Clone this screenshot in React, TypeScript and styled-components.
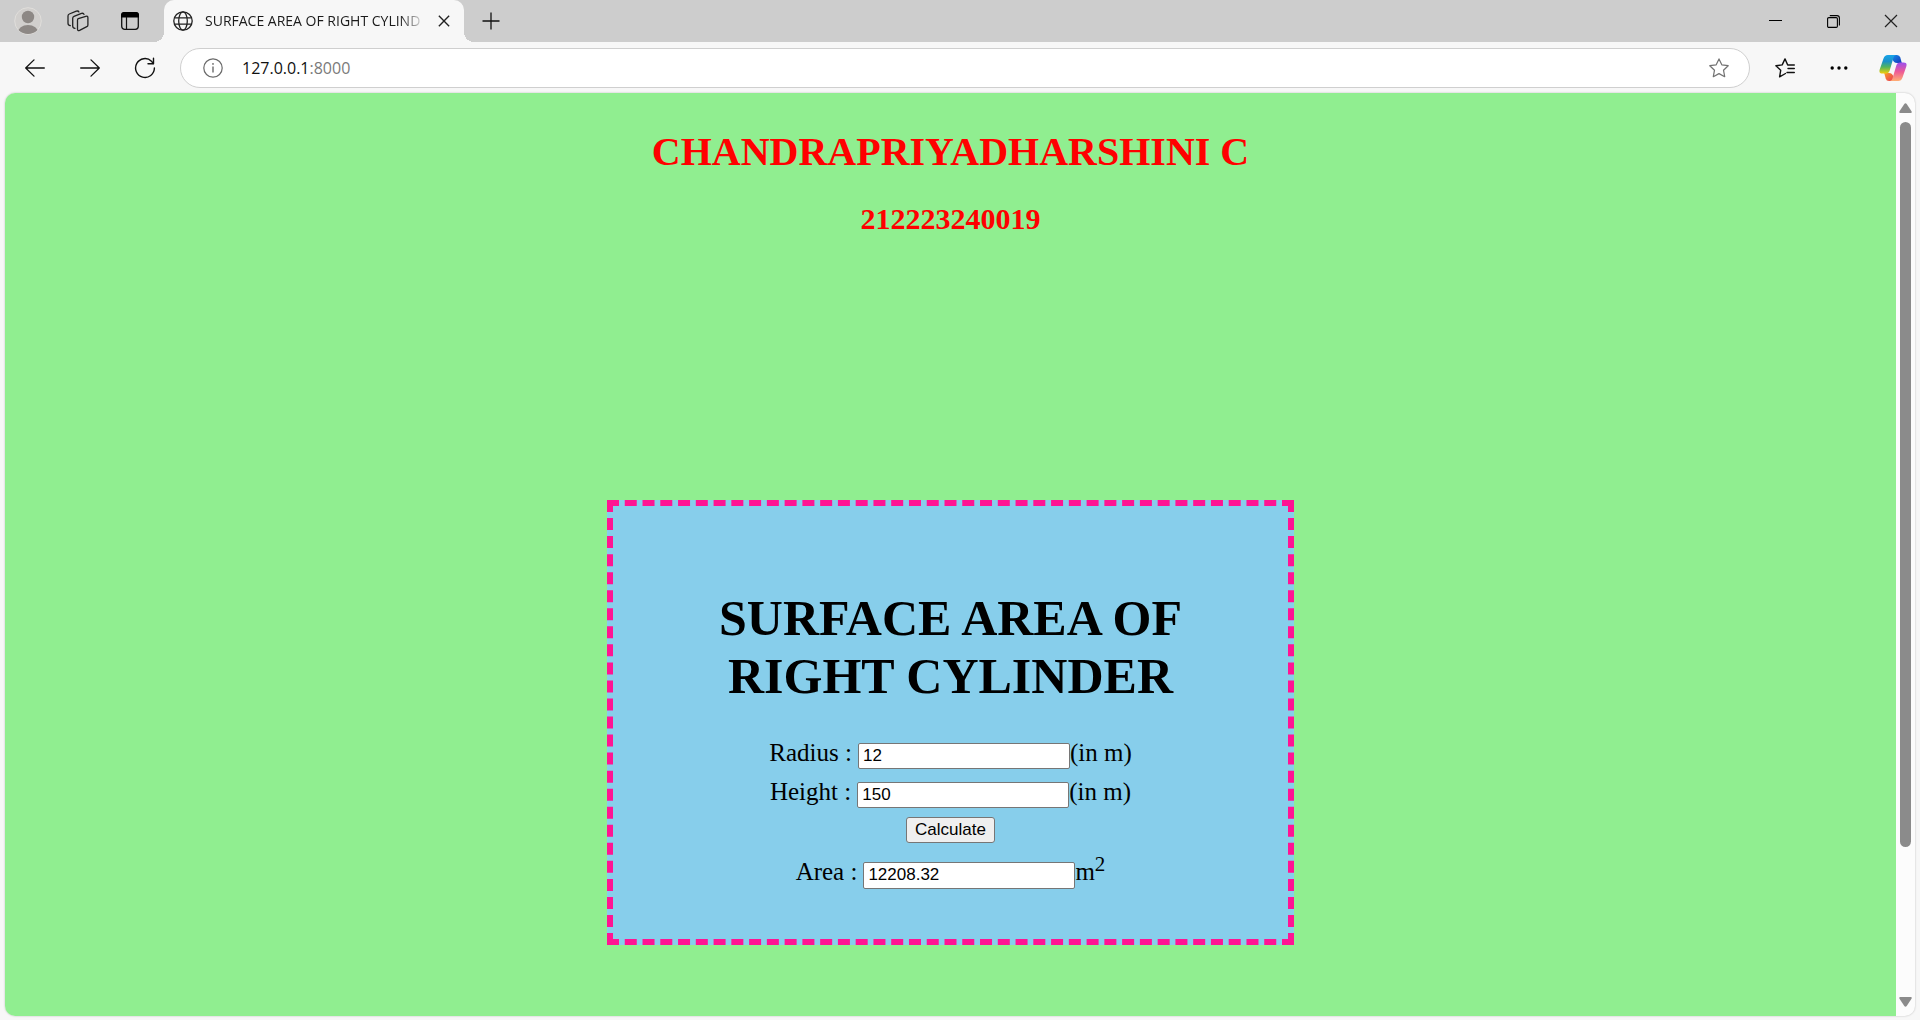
import React, { useState } from "react";
import styled, { createGlobalStyle } from "styled-components";

const uiFont = `"Open Sans", "Noto Sans", sans-serif`;
const serif = `"Liberation Serif", "Times New Roman", serif`;
const sans = `"Liberation Sans", Arial, sans-serif`;

const GlobalStyle = createGlobalStyle`
  *, *::before, *::after { box-sizing: border-box; }
  body { margin: 0; background: #f7f7f7; }
  h1, h2 { margin: 0; }
`;

const Browser = styled.div`
  display: flex;
  flex-direction: column;
  height: 100vh;
  background: #f7f7f7;
  font-family: ${uiFont};
`;

const TabStrip = styled.header`
  display: flex;
  height: 42px;
  padding-left: 2px;
  background: #cdcdcd;
`;

const ChromeButton = styled.button<{ $width: number }>`
  display: flex;
  flex: none;
  align-items: center;
  justify-content: center;
  width: ${(p) => p.$width}px;
  padding: 0;
  border: 0;
  background: transparent;
  color: #111;
`;

const StripButton = styled(ChromeButton)`
  height: 42px;
`;

const Tab = styled.div`
  position: relative;
  display: flex;
  align-items: center;
  width: 300px;
  margin-left: 9px;
  padding: 0 10px 0 9px;
  border-radius: 10px 10px 0 0;
  background: #f7f7f7;

  &::before,
  &::after {
    content: "";
    position: absolute;
    bottom: 0;
    width: 10px;
    height: 10px;
  }
  &::before {
    right: 100%;
    background: radial-gradient(circle at 0 0, transparent 10px, #f7f7f7 10px);
  }
  &::after {
    left: 100%;
    background: radial-gradient(circle at 100% 0, transparent 10px, #f7f7f7 10px);
  }
`;

const TabTitle = styled.span`
  margin-left: 12px;
  color: #1b1b1b;
  font-size: 14px;
  line-height: 20px;
  white-space: nowrap;
  mask-image: linear-gradient(to right, #000 calc(100% - 20px), rgba(0, 0, 0, 0.2));
`;

const Spacer = styled.div`
  flex: 1;
`;

const Toolbar = styled.nav`
  display: flex;
  align-items: center;
  height: 51px;
  padding-left: 7px;
`;

const AddressBar = styled.div`
  display: flex;
  flex: 1;
  align-items: center;
  height: 40px;
  margin: 0 8px;
  padding: 0 10px 0 22px;
  border: 1px solid #cfcfcf;
  border-radius: 20px;
  background: #fff;
`;

const Address = styled.div`
  flex: 1;
  margin-left: 19px;
  color: #111;
  font-size: 16px;
  line-height: 24px;
`;

const Port = styled.span`
  color: #7a7a7a;
`;

const Viewport = styled.div`
  display: flex;
  flex: 1;
  min-height: 0;
  margin: 0 5px 4px;
  overflow: hidden;
  border-radius: 10px;
  background: #fcfcfc;
  box-shadow: 0 0 2px rgba(0, 0, 0, 0.25);
`;

const Page = styled.main`
  display: flex;
  flex: 1;
  flex-direction: column;
  align-items: center;
  padding-top: 36px;
  background: lightgreen;
  color: #000;
  font-family: ${serif};
  text-align: center;
`;

const StudentName = styled.h1`
  color: red;
  font-size: 40px;
  line-height: 46px;
`;

const StudentNumber = styled.h2`
  margin-top: 27px;
  color: red;
  font-size: 30px;
  line-height: 34px;
`;

const Card = styled.form`
  display: flex;
  flex-direction: column;
  align-items: center;
  width: 687px;
  margin-top: 264px;
  padding: 50px;
  border: 6px dashed deeppink;
  background: skyblue;
  font-size: 25px;
  line-height: 29px;
`;

const CardTitle = styled.h1`
  margin: 33px 0;
  font-size: 50px;
  line-height: 58px;
`;

const Field = styled.div`
  display: flex;
  align-items: baseline;
  margin-bottom: 8px;
`;

const ResultField = styled(Field)`
  margin: 14px 0 0;
`;

const FieldLabel = styled.label`
  margin-right: 6px;
`;

const FieldInput = styled.input`
  width: 212px;
  height: 26px;
  padding: 1px 4px;
  border: 1px solid #767676;
  border-radius: 2px;
  outline: 0;
  background: #fff;
  color: #000;
  font: 17px ${sans};
`;

const ResultInput = styled(FieldInput)`
  height: 27px;
`;

const Sup = styled.sup`
  font-size: 21px;
  line-height: 0;
`;

const CalculateButton = styled.button`
  height: 26px;
  margin-top: 1px;
  padding: 0 8px;
  border: 1px solid #767676;
  border-radius: 3px;
  background: #efefef;
  color: #000;
  font: 17px ${sans};
`;

const Scrollbar = styled.div`
  display: flex;
  flex-direction: column;
  align-items: center;
  width: 19px;
  padding: 10px 0 9px;
`;

const Thumb = styled.div`
  flex: 725;
  width: 11px;
  margin-top: 9px;
  border-radius: 6px;
  background: #8b8b8b;
`;

const Rest = styled.div`
  flex: 150;
`;

const Avatar = () => (
  <svg width="28" height="28" viewBox="0 0 28 28">
    <defs>
      <clipPath id="avatar-clip"><circle cx="14" cy="14" r="13" /></clipPath>
    </defs>
    <circle cx="14" cy="14" r="13.3" fill="#d1cfcd" stroke="#e0dedb" />
    <circle cx="14" cy="10" r="6.2" fill="#8d8885" />
    <ellipse cx="14" cy="26" rx="10.3" ry="8" fill="#8d8885" clipPath="url(#avatar-clip)" />
  </svg>
);

const Workspaces = () => (
  <svg width="24" height="22" viewBox="0 0 24 22" fill="none" stroke="#222" strokeWidth="1.3" strokeLinejoin="round" strokeLinecap="round">
    <path d="M11.300 8.700 18.800 6.300q2.100-.5 2.100 1.400v7.200q0 1.200-1.100 1.700l-7.200 3.700q-2.100.9-2.100-1.200V10.200q0-1.100.8-1.500Z" />
    <path d="M8 18.300q-2.300-.2-2.300-2.300V8.300q0-1.500 1.300-2l7.500-2.900q2-.6 2.500 1" />
    <path d="M3.300 15.600Q1 15.300 1 13.200V6q0-1.500 1.300-2l7-2.800q2-.7 2.600.7" />
  </svg>
);

const TabActions = () => (
  <svg width="20" height="20" viewBox="0 0 20 20" fill="none">
    <rect x="1.700" y="1.700" width="16.600" height="16.600" rx="3" stroke="#111" strokeWidth="1.300" />
    <path d="M1 6.500V4q0-3 3-3h12q3 0 3 3v2.500Z" fill="#000" />
    <path d="M6.500 6v12" stroke="#111" strokeWidth="1.200" />
  </svg>
);

const Globe = () => (
  <svg width="20" height="20" viewBox="0 0 20 20" fill="none" stroke="#222" strokeWidth="1.300">
    <circle cx="10" cy="10" r="9.200" />
    <ellipse cx="10" cy="10" rx="4.300" ry="9.200" />
    <path d="M1.500 6.800h17M1.500 13.200h17" />
  </svg>
);

const Cross = ({ size, weight }: { size: number; weight: number }) => (
  <svg width={size} height={size} viewBox="0 0 14 14" stroke="#222" strokeWidth={weight}>
    <path d="m1 1 12 12M13 1 1 13" />
  </svg>
);

const Plus = () => (
  <svg width="18" height="18" viewBox="0 0 18 18" stroke="#111" strokeWidth="1.300">
    <path d="M9 .5v17M.5 9h17" />
  </svg>
);

const Minimize = () => (
  <svg width="13" height="13" viewBox="0 0 13 13"><path d="M0 5.500h13" stroke="#000" /></svg>
);

const Restore = () => (
  <svg width="13" height="13" viewBox="0 0 13 13" fill="none" stroke="#000" strokeWidth="1.100">
    <rect x=".6" y="2.600" width="9.800" height="9.800" rx="1.200" />
    <path d="M2.800.6h7.200q2.400 0 2.400 2.400v7.400" />
  </svg>
);

const Arrow = ({ forward }: { forward?: boolean }) => (
  <svg width="20" height="18" viewBox="0 0 20 18" fill="none" stroke="#111" strokeWidth="1.300" strokeLinecap="round" strokeLinejoin="round">
    <path d={forward ? "M.7 9h18.600M11 .9 19.300 9 11 17.100" : "M19.300 9H.7M9 .9.700 9 9 17.100"} />
  </svg>
);

const Reload = () => (
  <svg width="22" height="22" viewBox="0 0 22 22" fill="none" stroke="#111" strokeWidth="1.400" strokeLinecap="round" strokeLinejoin="round">
    <path d="M20.400 11a9.400 9.400 0 1 1-2.900-6.800l1.700 2.300" />
    <path d="M19.500 1.300v5.400h-5.500" />
  </svg>
);

const Info = () => (
  <svg width="20" height="20" viewBox="0 0 20 20" fill="none" stroke="#6a6a6a" strokeWidth="1.200">
    <circle cx="10" cy="10" r="9.200" />
    <path d="M10 8.500v6" strokeWidth="1.400" />
    <circle cx="10" cy="5.900" r=".9" fill="#6a6a6a" stroke="none" />
  </svg>
);

const Star = () => (
  <svg width="20" height="20" viewBox="0 0 20 20" fill="none" stroke="#727272" strokeWidth="1.200" strokeLinejoin="round">
    <path d="m10 .9 2.800 5.900 6.400.9-4.700 4.500 1.200 6.500-5.700-3.100-5.700 3.100 1.200-6.500L.8 7.700l6.400-.9Z" />
  </svg>
);

const Favorites = () => (
  <svg width="20" height="20" viewBox="0 0 20 20" fill="none" stroke="#111" strokeWidth="1.400" strokeLinejoin="round" strokeLinecap="round">
    <path d="M10.500 15.500 4.600 18.800l1.100-6.500L.9 7.800l6.300-.9L10 .9l2.700 6.100h6.600" />
    <path d="M13 10.500h6.300M12 14.500h7.300" />
  </svg>
);

const More = () => (
  <svg width="18" height="4" viewBox="0 0 18 4" fill="#000">
    <circle cx="2.200" cy="2" r="1.700" /><circle cx="9" cy="2" r="1.700" /><circle cx="15.800" cy="2" r="1.700" />
  </svg>
);

const Copilot = () => (
  <svg width="28" height="28" viewBox="0 0 28 28">
    <defs>
      <linearGradient id="cp-left" x1="0" y1="0" x2="0" y2="1">
        <stop offset="0" stopColor="#18a4e8" /><stop offset=".35" stopColor="#1b91c9" />
        <stop offset=".65" stopColor="#53b55c" /><stop offset="1" stopColor="#f2cf0a" />
      </linearGradient>
      <linearGradient id="cp-right" x1="0" y1="0" x2="0" y2="1">
        <stop offset="0" stopColor="#9b50ee" /><stop offset=".5" stopColor="#ee5a96" />
        <stop offset="1" stopColor="#ffae73" />
      </linearGradient>
      <linearGradient id="cp-top" x1="0" y1="0" x2="1" y2="1">
        <stop offset="0" stopColor="#1689e8" /><stop offset="1" stopColor="#1438b8" />
      </linearGradient>
      <linearGradient id="cp-bottom" x1="0" y1="0" x2="1" y2="1">
        <stop offset="0" stopColor="#f99b28" /><stop offset="1" stopColor="#e93a55" />
      </linearGradient>
    </defs>
    <path d="M14 1h4q2.600 0 3.300 2.500L22.800 9H18q-3.500 0-4.500-4Z" fill="url(#cp-top)" />
    <path d="M14 27h-4q-2.600 0-3.300-2.500L5.200 19H10q3.500 0 4.500 4Z" fill="url(#cp-bottom)" />
    <path d="M17.500 1H8.800Q5.600 1 4.500 4.500L.7 15.500Q-.5 19.500 3.500 19.500H7q2.800 0 3.700-3L14.300 4.200Q15.200 1 17.500 1Z" fill="url(#cp-left)" />
    <path d="M10.500 27h8.700q3.200 0 4.300-3.500l3.800-11q1.200-4-2.800-4H21q-2.800 0-3.700 3l-3.600 12.300q-.9 3.200-3.200 3.200Z" fill="url(#cp-right)" />
  </svg>
);

const ScrollArrow = ({ down }: { down?: boolean }) => (
  <svg width="13" height="10" viewBox="0 0 13 10" fill="#8b8b8b">
    <path d={down ? "M1.200 0h10.600q1.500.2.700 1.700L7.700 9Q6.500 10.500 5.300 9L.5 1.700Q-.2.200 1.200 0Z" : "M1.200 10h10.600q1.500-.2.700-1.700L7.700 1Q6.500-.5 5.300 1L.5 8.300Q-.2 9.800 1.200 10Z"} />
  </svg>
);

export default function App() {
  const [radius, setRadius] = useState("12");
  const [height, setHeight] = useState("150");
  const [area, setArea] = useState("12208.32");

  const calculate = (event: React.FormEvent) => {
    event.preventDefault();
    const r = Number(radius);
    const h = Number(height);
    setArea((2 * 3.14 * r * h + 2 * 3.14 * r * r).toFixed(2));
  };

  return (
    <Browser>
      <GlobalStyle />
      <TabStrip>
        <StripButton $width={51} aria-label="Profile"><Avatar /></StripButton>
        <StripButton $width={51} aria-label="Workspaces"><Workspaces /></StripButton>
        <StripButton $width={51} aria-label="Tab actions"><TabActions /></StripButton>
        <Tab>
          <Globe />
          <TabTitle>SURFACE AREA OF RIGHT CYLIND</TabTitle>
          <Spacer />
          <ChromeButton $width={20} aria-label="Close tab"><Cross size={12} weight={1.6} /></ChromeButton>
        </Tab>
        <StripButton $width={53} aria-label="New tab"><Plus /></StripButton>
        <Spacer />
        <StripButton $width={58} aria-label="Minimize"><Minimize /></StripButton>
        <StripButton $width={58} aria-label="Restore"><Restore /></StripButton>
        <StripButton $width={58} aria-label="Close"><Cross size={14} weight={1.2} /></StripButton>
      </TabStrip>

      <Toolbar>
        <ChromeButton $width={55} aria-label="Back"><Arrow /></ChromeButton>
        <ChromeButton $width={55} aria-label="Forward"><Arrow forward /></ChromeButton>
        <ChromeButton $width={55} aria-label="Reload"><Reload /></ChromeButton>
        <AddressBar>
          <Info />
          <Address>127.0.0.1<Port>:8000</Port></Address>
          <ChromeButton $width={40} aria-label="Add to favorites"><Star /></ChromeButton>
        </AddressBar>
        <ChromeButton $width={54} aria-label="Favorites"><Favorites /></ChromeButton>
        <ChromeButton $width={54} aria-label="More"><More /></ChromeButton>
        <ChromeButton $width={54} aria-label="Copilot"><Copilot /></ChromeButton>
      </Toolbar>

      <Viewport>
        <Page>
          <StudentName>CHANDRAPRIYADHARSHINI C</StudentName>
          <StudentNumber>212223240019</StudentNumber>
          <Card onSubmit={calculate}>
            <CardTitle>SURFACE AREA OF RIGHT CYLINDER</CardTitle>
            <Field>
              <FieldLabel htmlFor="radius">Radius :</FieldLabel>
              <FieldInput id="radius" value={radius} onChange={(e) => setRadius(e.target.value)} />
              <span>(in m)</span>
            </Field>
            <Field>
              <FieldLabel htmlFor="height">Height :</FieldLabel>
              <FieldInput id="height" value={height} onChange={(e) => setHeight(e.target.value)} />
              <span>(in m)</span>
            </Field>
            <CalculateButton type="submit">Calculate</CalculateButton>
            <ResultField>
              <FieldLabel htmlFor="area">Area :</FieldLabel>
              <ResultInput id="area" value={area} readOnly />
              <span>m<Sup>2</Sup></span>
            </ResultField>
          </Card>
        </Page>
        <Scrollbar>
          <ScrollArrow />
          <Thumb />
          <Rest />
          <ScrollArrow down />
        </Scrollbar>
      </Viewport>
    </Browser>
  );
}
